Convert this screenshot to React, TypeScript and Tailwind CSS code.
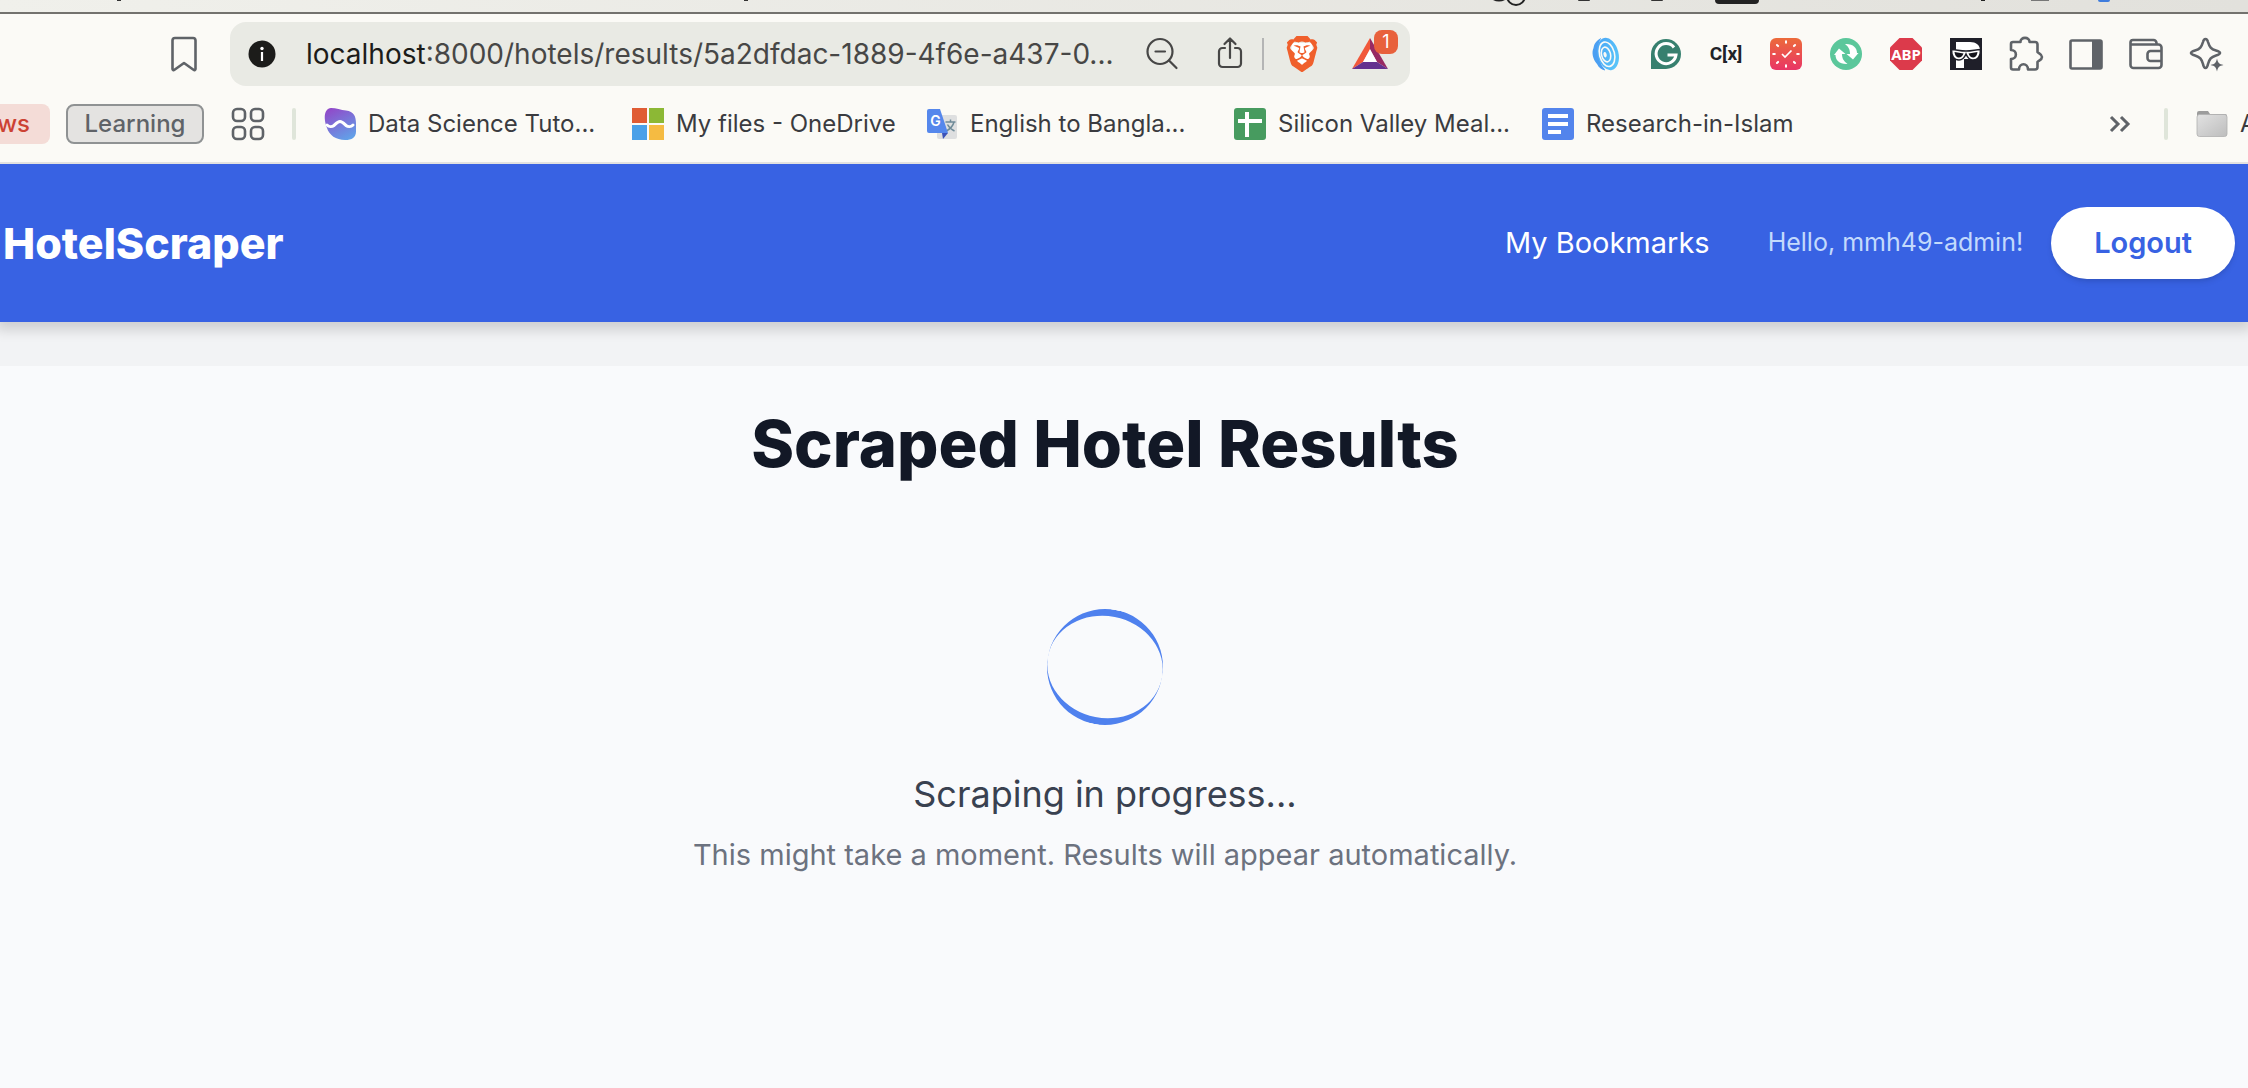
import type { ReactNode } from "react";
import { SiBrave } from "react-icons/si";

const line = {
  fill: "none",
  stroke: "currentColor",
  strokeWidth: 2.6,
  strokeLinecap: "round" as const,
  strokeLinejoin: "round" as const,
};

function Icon({ children, className = "size-9", box = 36 }: { children: ReactNode; className?: string; box?: number }) {
  return (
    <svg viewBox={`0 0 ${box} ${box}`} className={`block shrink-0 overflow-visible ${className}`} aria-hidden="true">
      {children}
    </svg>
  );
}

function BookmarkIcon() {
  return (
    <Icon>
      <path {...line} d="M9 2h18a2.500 2.500 0 0 1 2.500 2.500V33c0 1-1 1.500-2 .8L18 27l-9.500 6.800c-1 .7-2 .2-2-.8V4.500A2.500 2.500 0 0 1 9 2z" />
    </Icon>
  );
}

function InfoIcon() {
  return (
    <Icon className="size-7" box={28}>
      <circle cx="14" cy="14" r="13.500" fill="#1c1c1a" />
      <circle cx="14" cy="8.500" r="1.700" fill="#fff" />
      <path d="M14 12v9" stroke="#fff" strokeWidth="2.200" />
    </Icon>
  );
}

function ZoomOutIcon() {
  return (
    <Icon>
      <circle {...line} cx="16" cy="15.500" r="12.500" strokeWidth="2.200" />
      <path {...line} d="M11.500 15.500h9.500M25 24.500l7.500 7.500" strokeWidth="2.200" />
    </Icon>
  );
}

function ShareIcon() {
  return (
    <Icon>
      <path {...line} strokeWidth="2.200" d="M13 12h-2.500a3.500 3.500 0 0 0-3.500 3.500v12a3.500 3.500 0 0 0 3.500 3.500h15a3.500 3.500 0 0 0 3.500-3.500v-12a3.500 3.500 0 0 0-3.500-3.500H23M18 22V3M12.500 8 18 2.500 23.500 8" />
    </Icon>
  );
}

function BraveIcon() {
  return (
    <span className="relative flex size-9 items-center justify-center">
      <svg viewBox="0 0 36 36" className="absolute inset-0" aria-hidden="true">
        <path d="M8 7h20l1 12-4 9-7 5-7-5-4-9z" fill="#fff" />
      </svg>
      <SiBrave className="relative size-9 text-[#f0602c]" />
    </span>
  );
}

function RewardsIcon() {
  return (
    <Icon>
      <path d="M18 2v11l-7 13L0 33z" fill="#f1583a" />
      <path d="M18 2v11l7 13 11 7z" fill="#982a63" />
      <path d="M0 33l11-7h14l11 7z" fill="#64318f" />
      <path d="M18 13.500l7 12.500H11z" fill="#fff" />
    </Icon>
  );
}

function SpeakerIcon() {
  return (
    <Icon>
      <defs>
        <linearGradient id="speaker" x1="0" y1="0" x2="1" y2="1">
          <stop offset="0" stopColor="#4aa3f5" />
          <stop offset="1" stopColor="#5ccbfa" />
        </linearGradient>
      </defs>
      <path d="M13 2C6 6 6 10 5.500 12 3.500 16 4.500 23 9 28c2 4 5 6 8 6.500z" fill="#4b9ff2" />
      <path d="M16 2c-8 2-6 30 5 32" stroke="#fbfaf6" strokeWidth="2" fill="none" />
      <g transform="rotate(-14 20 18)">
        <ellipse cx="20" cy="18" rx="10.500" ry="16.500" fill="url(#speaker)" />
        <ellipse cx="19" cy="18" rx="7.500" ry="12.500" fill="none" stroke="#fbfaf6" strokeWidth="1.600" />
        <ellipse cx="18" cy="18" rx="4.500" ry="7.500" fill="none" stroke="#fbfaf6" strokeWidth="1.600" />
        <ellipse cx="17" cy="18" rx="1.600" ry="2.800" fill="#fbfaf6" />
      </g>
    </Icon>
  );
}

function GrammarIcon() {
  return (
    <Icon>
      <path d="M18 3a15 15 0 1 1 0 30H3V18A15 15 0 0 1 18 3z" fill="#37806f" />
      <path d="M26 11.500A10 10 0 1 0 28 19H19.500" fill="none" stroke="#fff" strokeWidth="3" />
    </Icon>
  );
}

function ClockIcon() {
  const ticks = [0, 45, 90, 135, 180, 225, 270, 315];
  return (
    <Icon>
      <defs>
        <linearGradient id="clock" x1="0" y1="0" x2="0" y2="1">
          <stop offset="0" stopColor="#ec6b3a" />
          <stop offset="1" stopColor="#e93566" />
        </linearGradient>
      </defs>
      <rect x="2" y="2" width="32" height="32" rx="6" fill="url(#clock)" />
      {ticks.map((t) => (
        <path key={t} d="M18 5.200v1.600" stroke="#fff" strokeWidth="2" strokeLinecap="round" transform={`rotate(${t} 18 18)`} />
      ))}
      <path d="M14 18l3 3 6.500-6.500" fill="none" stroke="#fff" strokeWidth="1.700" />
    </Icon>
  );
}

function SyncIcon() {
  return (
    <Icon>
      <circle cx="18" cy="18" r="16" fill="#5bc79b" />
      <path d="M17 8c8-.5 12 4 12 9h1.500L25 23.500 18.500 18H22c0-4-1-7-5-10z" fill="#fff" />
      <path d="M19.500 28c-8 .5-12-4-12-9H6l5-6.500 6.500 5.500H14c0 4 1.500 7 5.500 10z" fill="#fff" />
    </Icon>
  );
}

function AdblockIcon() {
  return (
    <Icon>
      <path d="M11.500 2h13L34 11.500v13L24.500 34h-13L2 24.500v-13z" fill="#dc3a4b" />
      <text x="18" y="23.500" textAnchor="middle" fontSize="15" fontWeight="700" fontFamily="Noto Sans, sans-serif" fill="#fff">ABP</text>
    </Icon>
  );
}

function GlassesIcon() {
  return (
    <Icon>
      <rect x="2" y="2" width="32" height="32" fill="#1f1f29" />
      <path d="M8 6h14c6 0 10 3 10 8s-4 9-10 9h-6v9H8z" fill="#fff" />
      <path d="M3.500 13.500c5 0 8 1.500 14.500 1.500s9.500-1.500 14.500-1.500c0 5-2 10.500-7.500 10.500-3.500 0-5.500-2.500-7-6-1.500 3.500-3.500 6-7 6-5.500 0-7.500-5.500-7.500-10.500z" fill="#fff" stroke="#1f1f29" strokeWidth="1.500" />
      <path d="M6.500 16l9 1.500c-1 2.500-2.500 4-4.500 4-3 0-4-2.500-4.500-5.500zM29.500 16l-9 1.500c1 2.500 2.500 4 4.500 4 3 0 4-2.500 4.500-5.500z" fill="#14141c" />
    </Icon>
  );
}

function PuzzleIcon() {
  return (
    <Icon>
      <path {...line} d="M5 6h7.500c-.5-5.500 9.500-5.500 9 0H27a2.500 2.500 0 0 1 2.500 2.500V16c1 1.500 4.500 2 4.500 5s-3.500 3.500-4.500 5v5a2.500 2.500 0 0 1-2.500 2.500h-7c0-7-9-7-9 0H5a2 2 0 0 1-2-2V23c6.500 0 6.500-9 0-9V8a2 2 0 0 1 2-2z" />
    </Icon>
  );
}

function SidePanelIcon() {
  return (
    <Icon>
      <rect {...line} x="2.500" y="4.500" width="31" height="28" rx="1.500" />
      <path d="M24 4h10v29H24z" fill="currentColor" />
    </Icon>
  );
}

function WalletIcon() {
  return (
    <Icon>
      <path {...line} d="M2.500 8.500h28a3 3 0 0 1 3 3V29a3 3 0 0 1-3 3H5.500a3 3 0 0 1-3-3V6.500a2.500 2.500 0 0 1 2.500-2.500h20.500a3 3 0 0 1 3 3M33 15H22.500a3 3 0 0 0-3 3v4a3 3 0 0 0 3 3H33" />
    </Icon>
  );
}

function SparkleIcon() {
  return (
    <Icon>
      <path {...line} d="M17.500 3c1.500 0 2 1 2.500 3 1.500 5 3 7 8 8.500 2.500.7 4 1.200 4 2.500s-1.500 1.800-4 2.500c-5 1.500-6.500 3.500-8 8.500-.5 2.500-1 4-2.500 4s-2-1.500-2.500-4c-1.500-5-3-7-8-8.500C4.500 18.800 3 18.300 3 17s1.500-1.800 4-2.500c5-1.500 6.500-3.500 8-8.500.5-2 1-3 2.500-3z" />
      <path d="M29 22.500c1 4.500 2 5.500 6.500 6.500-4.500 1-5.500 2-6.500 6.500-1-4.500-2-5.500-6.500-6.500 4.500-1 5.500-2 6.500-6.500z" fill="currentColor" />
    </Icon>
  );
}

function AppsIcon() {
  return (
    <Icon>
      <rect {...line} x="3" y="3" width="12" height="12" rx="4" />
      <rect {...line} x="21" y="3" width="12" height="12" rx="4" />
      <rect {...line} x="3" y="21" width="12" height="12" rx="4" />
      <rect {...line} x="21" y="21" width="12" height="12" rx="4" />
    </Icon>
  );
}

function DataIcon() {
  return (
    <Icon className="size-8" box={32}>
      <defs>
        <linearGradient id="data" x1="0.200" y1="0" x2="0.700" y2="1">
          <stop offset="0" stopColor="#9149c9" />
          <stop offset="1" stopColor="#62a0e8" />
        </linearGradient>
      </defs>
      <path d="M7 0c5 0 10 2 15 2.500 8 1 10 6 10 13v8c0 6-4 8.500-11 8.500-9 0-16-5-18-12C0 12-1 1 7 0z" fill="url(#data)" />
      <path d="M3 17c2 2 5 2 7 .5 2-2 3.500-4 6-4s4 2 6 4c2 1.500 5 1.500 7-.5" fill="none" stroke="#fff" strokeWidth="3" strokeLinecap="round" />
    </Icon>
  );
}

function MicrosoftIcon() {
  return (
    <Icon className="size-8" box={32}>
      <path d="M0 0h15v15H0z" fill="#e05c34" />
      <path d="M17 0h15v15H17z" fill="#8cb835" />
      <path d="M0 17h15v15H0z" fill="#4aa0e8" />
      <path d="M17 17h15v15H17z" fill="#f5bb42" />
    </Icon>
  );
}

function TranslateIcon() {
  return (
    <Icon className="size-8" box={32}>
      <rect x="11" y="7" width="20" height="24" rx="2" fill="#dedfe0" />
      <path d="M16 25h6l-5 6z" fill="#3b52b8" />
      <path d="M19.500 14h10M24.500 11.500V14M28 14c-1 4-4 7-7.500 9M21.500 16.500c1.500 3 4 5 7 6.500" fill="none" stroke="#6f8b98" strokeWidth="1.500" />
      <path d="M3 1h11l8 24H3a2 2 0 0 1-2-2V3a2 2 0 0 1 2-2z" fill="#5587ec" />
      <text x="9.500" y="18" textAnchor="middle" fontSize="14" fontWeight="600" fontFamily="Inter, sans-serif" fill="#fff">G</text>
    </Icon>
  );
}

function SheetIcon() {
  return (
    <Icon className="size-8" box={32}>
      <rect width="32" height="32" rx="3" fill="#479b5f" />
      <path d="M4 13h24M13 4v25" stroke="#fff" strokeWidth="4" />
    </Icon>
  );
}

function DocIcon() {
  return (
    <Icon className="size-8" box={32}>
      <rect width="32" height="32" rx="3" fill="#5384ec" />
      <path d="M6 8h20M6 16h20M6 24h13" stroke="#fff" strokeWidth="4" />
    </Icon>
  );
}

function FolderIcon() {
  return (
    <Icon className="size-8" box={32}>
      <defs>
        <linearGradient id="folder" x1="0" y1="0" x2="1" y2="1">
          <stop offset="0" stopColor="#e2e2e2" />
          <stop offset="1" stopColor="#bdbdbd" />
        </linearGradient>
      </defs>
      <path d="M1 10V5a2 2 0 0 1 2-2h9l2 3h15a2 2 0 0 1 2 2v4z" fill="#9c9c9c" />
      <rect x="1" y="6.500" width="30" height="22" rx="2.500" fill="url(#folder)" stroke="#b0b0b0" strokeWidth="0.800" />
    </Icon>
  );
}

const extensions = [
  { label: "Read aloud", icon: <SpeakerIcon /> },
  { label: "Grammar checker", icon: <GrammarIcon /> },
  { label: "Code cells", icon: <span className="font-['Liberation_Sans_Narrow','Roboto',sans-serif] text-[19px] font-bold text-[#202228]">C[x]</span> },
  { label: "Time tracker", icon: <ClockIcon /> },
  { label: "Sync", icon: <SyncIcon /> },
  { label: "Ad blocker", icon: <AdblockIcon /> },
  { label: "Incognito profile", icon: <GlassesIcon /> },
  { label: "Extensions", icon: <PuzzleIcon /> },
  { label: "Side panel", icon: <SidePanelIcon /> },
  { label: "Wallet", icon: <WalletIcon /> },
  { label: "Assistant", icon: <SparkleIcon /> },
];

const bookmarks = [
  { title: "Data Science Tuto...", icon: <DataIcon />, width: "w-[308px]" },
  { title: "My files - OneDrive", icon: <MicrosoftIcon />, width: "w-[294px]" },
  { title: "English to Bangla...", icon: <TranslateIcon />, width: "w-[308px]" },
  { title: "Silicon Valley Meal...", icon: <SheetIcon />, width: "w-[308px]" },
  { title: "Research-in-Islam", icon: <DocIcon />, width: "w-[308px]" },
];

function TabStrip() {
  return (
    <div className="flex h-3.5 items-start border-b-2 border-[#73726e] bg-linear-to-r from-[#f0f0eb] to-[#e2e1dc] pr-[138px]" aria-hidden="true">
      <span className="ml-[117px] h-px w-1 bg-[#333]" />
      <span className="ml-[623px] h-px w-1 bg-[#333]" />
      <span className="grow" />
      <svg viewBox="0 0 36 6" className="h-1.5 w-9">
        <path d="M1 0c4 2 8 2 12 0z" fill="#222" />
        <path d="M15-5a9 9 0 0 0 18 0" transform="translate(0 1)" fill="none" stroke="#222" strokeWidth="2" />
      </svg>
      <span className="ml-[50px] h-px w-3 rounded-b-full bg-[#333]" />
      <span className="ml-[61px] h-px w-3 rounded-b-full bg-[#333]" />
      <span className="ml-[52px] h-1 w-11 rounded-b-md bg-[#222]" />
      <span className="ml-[222px] h-px w-1 bg-[#222]" />
      <span className="ml-[46px] h-px w-[18px] bg-[#777]" />
      <span className="ml-[49px] h-0.5 w-3 rounded-b-full bg-[#3f7ddd]" />
    </div>
  );
}

function Toolbar() {
  return (
    <div className="flex h-16 items-center pr-6 pl-[166px]">
      <button type="button" aria-label="Bookmark this page" className="text-[#5f6368]">
        <BookmarkIcon />
      </button>
      <div className="ml-7 flex h-16 grow items-center rounded-2xl bg-[#e9eae4] pr-[22px] pl-[18px] text-[#474746]">
        <button type="button" aria-label="Site information">
          <InfoIcon />
        </button>
        <label htmlFor="address" className="ml-[30px] text-[28px] text-[#1c1c1a]">localhost</label>
        <input id="address" type="text" readOnly defaultValue=":8000/hotels/results/5a2dfdac-1889-4f6e-a437-0..." className="w-0 min-w-0 grow bg-transparent text-[28px] outline-none" />
        <div className="flex items-center">
          <button type="button" aria-label="Zoom out" className="mr-8"><ZoomOutIcon /></button>
          <button type="button" aria-label="Share"><ShareIcon /></button>
          <span className="mr-5 ml-3.5 h-8 w-0.5 bg-[#b4b5b5]" />
          <button type="button" aria-label="Brave Shields"><BraveIcon /></button>
          <button type="button" aria-label="Brave Rewards" className="relative ml-8">
            <RewardsIcon />
            <span className="absolute -top-1.5 left-[22px] flex size-6 items-center justify-center rounded-lg bg-[#e8613c] text-[18px] leading-6 text-white">1</span>
          </button>
        </div>
      </div>
      <div className="ml-[178px] flex items-center gap-6 text-[#5f6368]">
        {extensions.map((item) => (
          <button key={item.label} type="button" aria-label={item.label} className="flex size-9 items-center justify-center">
            {item.icon}
          </button>
        ))}
      </div>
    </div>
  );
}

function BookmarksBar() {
  return (
    <nav aria-label="Bookmarks" className="mt-[18px] flex h-10 items-center overflow-hidden text-[24px] whitespace-nowrap text-[#3a3b40]">
      <button type="button" className="flex h-10 w-[50px] items-center justify-end rounded-r-lg bg-[#f4dcd7] pr-5 font-medium text-[#cc4234]">ws</button>
      <button type="button" className="ml-4 flex h-10 w-[138px] items-center justify-center rounded-lg border-2 border-[#8f9293] bg-[#e4e3e1] font-medium text-[#5f6368]">Learning</button>
      <button type="button" aria-label="All groups" className="ml-[26px] text-[#5f6368]"><AppsIcon /></button>
      <span className="ml-[26px] h-8 w-1 rounded-sm bg-[#dfe5da]" />
      <div className="ml-7 flex">
        {bookmarks.map((b) => (
          <a key={b.title} href="#" className={`flex items-center gap-3 ${b.width}`}>
            {b.icon}
            {b.title}
          </a>
        ))}
      </div>
      <button type="button" aria-label="More bookmarks" className="ml-auto text-[#5f6368]">
        <Icon className="size-6" box={24}>
          <path {...line} strokeLinecap="butt" strokeLinejoin="miter" strokeWidth="3" d="M3 5l7 7-7 7M13 5l7 7-7 7" />
        </Icon>
      </button>
      <span className="ml-8 h-8 w-1 rounded-sm bg-[#dfe5da]" />
      <a href="#" aria-label="All bookmarks" className="ml-7 flex w-[52px] items-center gap-3">
        <FolderIcon />
        <span>A</span>
      </a>
    </nav>
  );
}

function SiteHeader() {
  return (
    <header className="relative flex items-center justify-between bg-[#3862e3] py-[43px] pr-[13px] pl-[3px] text-white shadow-[0_4px_12px_4px_rgba(0,0,0,0.15)]">
      <a href="#" className="text-[43px] leading-[50px] font-extrabold">HotelScraper</a>
      <div className="flex items-center">
        <a href="#" className="text-[29px]">My Bookmarks</a>
        <span className="ml-[58px] text-[25px] text-[#c3dafc]">Hello, mmh49-admin!</span>
        <button type="button" className="ml-7 h-[72px] rounded-full bg-white px-[43px] text-[29px] font-semibold text-[#3862e3] shadow-md">Logout</button>
      </div>
    </header>
  );
}

export default function App() {
  return (
    <div className="flex min-h-screen flex-col overflow-hidden bg-[#f2f3f5] font-['Inter',sans-serif]">
      <div className="relative z-10 border-b-2 border-[#e2e1e0] bg-[#fbfaf6] pb-[18px]">
        <TabStrip />
        <div className="pt-2">
          <Toolbar />
          <BookmarksBar />
        </div>
      </div>
      <SiteHeader />
      <main className="mt-11 flex grow flex-col items-center bg-[#f9fafc] pt-[42px] pr-[38px] text-center">
        <h1 className="text-[65px] leading-[72px] font-extrabold text-[#121826]">Scraped Hotel Results</h1>
        <div role="status" className="mt-[129px] flex flex-col items-center">
          <div className="size-[116px] rotate-[11deg] rounded-full border-y-[7px] border-[#4f81ee]" />
          <p className="mt-11 text-[36px] leading-[50px] text-[#394150]">Scraping in progress...</p>
          <p className="mt-3.5 text-[29px] leading-[43px] text-[#6c727f]">This might take a moment. Results will appear automatically.</p>
        </div>
      </main>
    </div>
  );
}
